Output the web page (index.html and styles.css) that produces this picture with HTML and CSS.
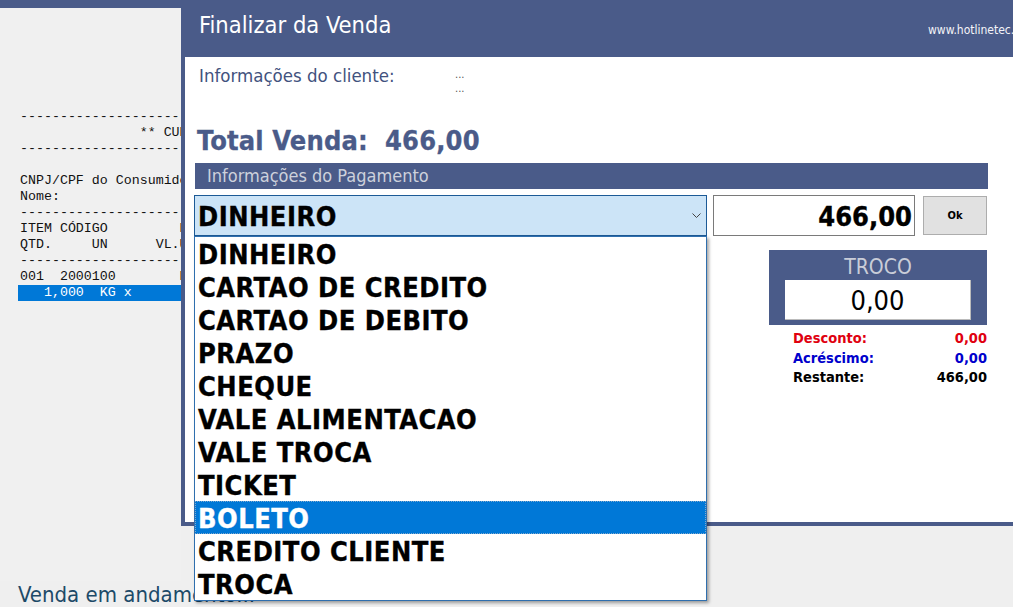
FILE: index.html
```html
<!DOCTYPE html>
<html lang="pt-BR">
<head>
<meta charset="utf-8">
<title>Finalizar da Venda</title>
<link rel="stylesheet" href="styles.css">
</head>
<body>
<div class="app">
  <div class="app-topbar"></div>
  <div class="app-main">
    <pre class="receipt">---------------------------------------
               ** CUPOM NAO FISCAL **
---------------------------------------

CNPJ/CPF do Consumidor:
Nome:
---------------------------------------
ITEM CÓDIGO         DESCRIÇÃO
QTD.     UN      VL.UNIT
---------------------------------------
001  2000100        DESCRICAO
<span class="receipt-sel">   1,000  KG x                          </span></pre>
  </div>
  <div class="status">Venda em andamento...</div>
</div>

<div class="modal">
  <div class="modal-title">
    <span class="modal-title-text">Finalizar da Venda</span>
    <span class="modal-url">www.hotlinetec.com.br</span>
  </div>
  <div class="modal-body">
    <div class="client">
      <span class="client-label">Informações do cliente:</span>
      <span class="client-values"><span>...</span><span>...</span></span>
    </div>
    <div class="total">Total Venda:&nbsp; 466,00</div>
    <div class="section-head">Informações do Pagamento</div>
    <div class="pay-row">
      <div class="combo">
        <span class="combo-value">DINHEIRO</span>
        <svg class="combo-arrow" width="9" height="5" viewBox="0 0 9 5"><path d="M0.5 0.5 L4.5 4.5 L8.5 0.5" fill="none" stroke="#444" stroke-width="1"/></svg>
        <ul class="combo-list">
          <li>DINHEIRO</li>
          <li>CARTAO DE CREDITO</li>
          <li>CARTAO DE DEBITO</li>
          <li>PRAZO</li>
          <li>CHEQUE</li>
          <li>VALE ALIMENTACAO</li>
          <li>VALE TROCA</li>
          <li>TICKET</li>
          <li class="selected">BOLETO</li>
          <li>CREDITO CLIENTE</li>
          <li>TROCA</li>
        </ul>
      </div>
      <div class="amount">466,00</div>
      <button class="ok-btn">Ok</button>
    </div>
    <div class="side">
      <div class="troco">
        <div class="troco-label">TROCO</div>
        <div class="troco-value">0,00</div>
      </div>
      <div class="summary">
        <div class="sum-row red"><span>Desconto:</span><span>0,00</span></div>
        <div class="sum-row blue"><span>Acréscimo:</span><span>0,00</span></div>
        <div class="sum-row"><span>Restante:</span><span>466,00</span></div>
      </div>
    </div>
  </div>
</div>
</body>
</html>
```
FILE: styles.css
```css
* { box-sizing: border-box; }
html, body {
  margin: 0;
  padding: 0;
}
body {
  width: 1013px;
  height: 607px;
  overflow: hidden;
  background: #efefef;
  position: relative;
  font-family: "DejaVu Sans Condensed", "DejaVu Sans", sans-serif;
}

/* background application */
.app {
  height: 607px;
  display: flex;
  flex-direction: column;
}
.app-topbar {
  height: 8px;
  background: #4a5b89;
}
.app-main {
  flex: 1;
  width: 181px;
  overflow: hidden;
  background: #f0f0f0;
}
.receipt {
  margin: 101px 0 0 20px;
  font-family: "Liberation Mono", monospace;
  font-size: 13.3px;
  line-height: 16px;
  color: #111;
}
.receipt-sel {
  display: inline-block;
  margin-left: -2px;
  padding-left: 2px;
  background: #0078d7;
  color: #fff;
  height: 16px;
}
.status {
  padding: 0 0 0 18px;
  height: 26px;
  font-size: 22px;
  color: #1d4a68;
  line-height: 28px;
  white-space: nowrap;
}

/* modal window */
.modal {
  position: absolute;
  left: 181px;
  top: 0;
  width: 900px;
  height: 526px;
  background: #fff;
  border-left: 4px solid #4a5b89;
  border-bottom: 4px solid #4a5b89;
}
.modal-title {
  height: 57px;
  margin-left: -4px;
  padding: 0 29px 0 18px;
  background: #4a5b89;
  display: flex;
  align-items: center;
  color: #fff;
}
.modal-title-text {
  font-size: 23.5px;
  margin-top: -8px;
}
.modal-url {
  margin-left: auto;
  font-size: 12px;
  margin-top: 2px;
  color: #f4f4f8;
}
.modal-body {
  position: relative;
  padding: 8px 0 0 10px;
}
.client {
  display: flex;
  padding-left: 4px;
  height: 52px;
}
.client-label {
  width: 256px;
  font-size: 18.5px;
  color: #42527e;
}
.client-values {
  display: flex;
  flex-direction: column;
  font-size: 11px;
  line-height: 14px;
  color: #555;
  padding-top: 3px;
}
.total {
  font-size: 27px;
  font-weight: bold;
  letter-spacing: 0.15px;
  -webkit-text-stroke: 0.3px #4a5b89;
  color: #4a5b89;
  padding-left: 2px;
  height: 46px;
  line-height: 47px;
}
.section-head {
  width: 793px;
  height: 26px;
  background: #4a5b89;
  color: #cdd1dc;
  font-size: 18px;
  line-height: 25px;
  padding-left: 12px;
}
.pay-row {
  display: flex;
  align-items: flex-start;
  margin-top: 6px;
  margin-left: -1px;
}
.combo {
  position: relative;
  width: 513px;
  height: 41px;
  background: #cce4f7;
  border: 1px solid #1c5a96;
  display: flex;
  align-items: center;
  padding-left: 3px;
  z-index: 2;
}
.combo-value {
  font-size: 27px;
  font-weight: bold;
  letter-spacing: 0.5px;
  -webkit-text-stroke: 0.35px #000;
  color: #000;
  margin-top: 2px;
}
.combo-arrow {
  margin-left: auto;
  margin-right: 5px;
}
.combo-list {
  position: absolute;
  top: 40px;
  left: -1px;
  width: 513px;
  margin: 0;
  padding: 0;
  list-style: none;
  background: #fff;
  border: 1px solid #2f6fae;
  box-shadow: 2px 2px 3px rgba(0, 0, 0, 0.35);
}
.combo-list li {
  height: 33px;
  padding-top: 3px;
  line-height: 30px;
  padding-left: 3px;
  font-size: 27px;
  font-weight: bold;
  letter-spacing: 0.5px;
  -webkit-text-stroke: 0.35px #000;
  color: #000;
  white-space: nowrap;
}
.combo-list li.selected {
  background: #0078d7;
  color: #fff;
  -webkit-text-stroke: 0.35px #fff;
  outline: 1px dotted #7fa9cf;
  outline-offset: -1px;
}
.amount {
  width: 202px;
  height: 41px;
  margin-left: 6px;
  border: 1px solid #7a7a7a;
  font-size: 27px;
  font-weight: bold;
  -webkit-text-stroke: 0.35px #000;
  color: #000;
  text-align: right;
  line-height: 41px;
  padding-right: 2px;
}
.ok-btn {
  width: 64px;
  height: 39px;
  margin: 1px 0 0 8px;
  background: #e1e1e1;
  border: 1px solid #adadad;
  font-family: "DejaVu Sans Condensed", "DejaVu Sans", sans-serif;
  font-size: 11px;
  font-weight: bold;
  color: #000;
  padding: 0;
}
.side {
  width: 218px;
  margin-left: 574px;
  margin-top: 14px;
}
.troco {
  height: 75px;
  background: #4a5b89;
  padding: 3px 16px 0 16px;
}
.troco-label {
  text-align: center;
  color: #c9cdd8;
  font-size: 21px;
  line-height: 28px;
  height: 27px;
}
.troco-value {
  background: #fff;
  height: 40px;
  border-right: 1px solid #bbb;
  border-bottom: 1px solid #bbb;
  text-align: center;
  font-size: 27px;
  line-height: 42px;
  color: #000;
}
.summary {
  padding: 4px 0 0 24px;
}
.sum-row {
  display: flex;
  justify-content: space-between;
  font-size: 14.5px;
  font-weight: bold;
  line-height: 19.5px;
  color: #000;
}
.sum-row.red { color: #e0000f; }
.sum-row.blue { color: #0000cc; }
```
